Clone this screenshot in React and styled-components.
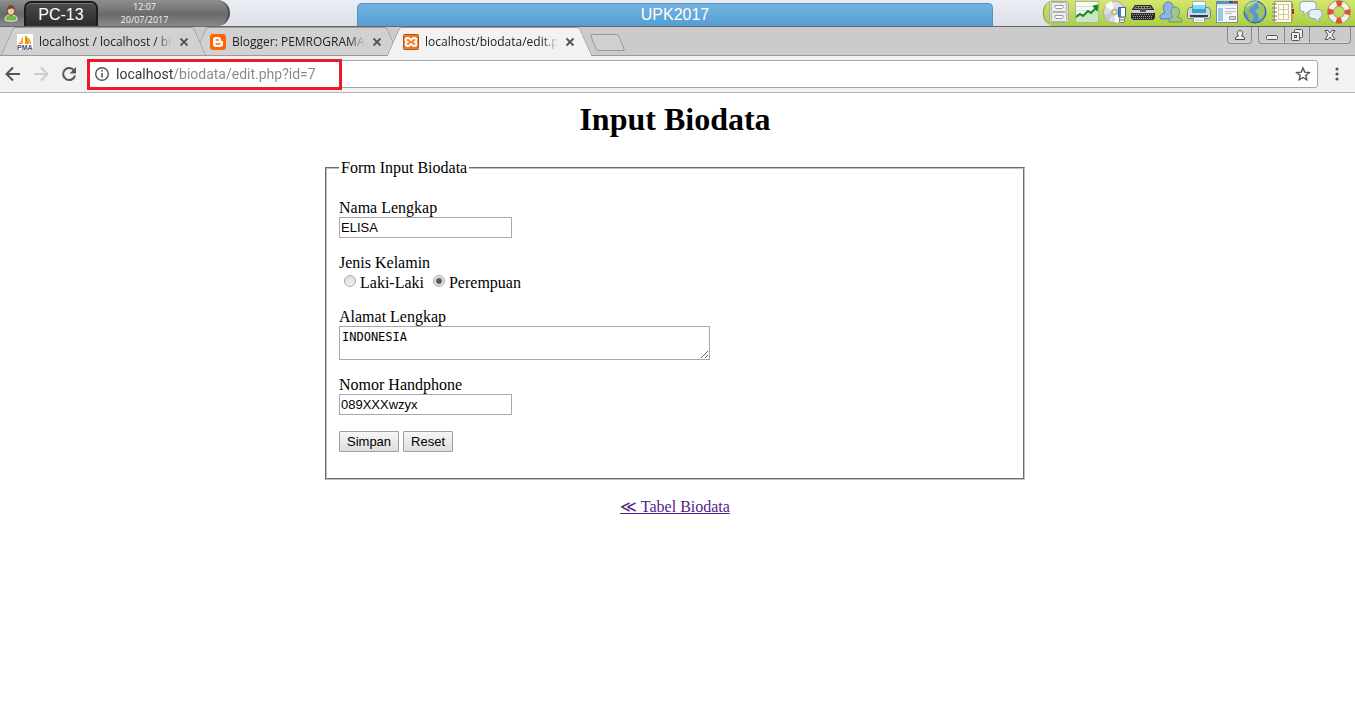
import React from "react"
import styled, { createGlobalStyle, css } from "styled-components"

const sans = `"Liberation Sans", Arial, sans-serif`
const serif = `"Liberation Serif", "Times New Roman", serif`
const chromeFont = `"Open Sans", "Segoe UI", sans-serif`

const GlobalStyle = createGlobalStyle`
    * { box-sizing: border-box; }
    body {
        margin: 0;
        background: #fff;
        overflow-x: hidden;
    }
    button, input, textarea { margin: 0; }`

// ---- desktop bar

const DesktopBar = styled.header`
    display: grid;
    grid-template-columns: 357fr 636fr 362fr;
    height: 26px;
    background: linear-gradient(#eceef5, #dcdfe8);`

const StationPanel = styled.div`
    display: flex;
    justify-self: start;
    width: 230px;
    border-right: 2px solid #4a4a4a;
    border-radius: 0 14px 14px 0;
    background: linear-gradient(#8f8f8f, #6a6a6a 55%, #8a8a8a);`

const UserButton = styled.button`
    width: 24px;
    padding: 0 2px 0 0;
    border: none;
    background: none;
    line-height: 0;`

const StationName = styled.button`
    width: 74px;
    margin-top: 1px;
    padding: 0;
    border: 2px solid #1c1c1c;
    border-bottom: none;
    border-radius: 7px 7px 0 0;
    background: linear-gradient(#4a4a4a, #2c2c2c);
    box-shadow: inset 0 1px 0 #777;
    color: #fff;
    font: 16px/22px ${sans};`

const Clock = styled.div`
    flex: 1;
    padding-right: 37px;
    color: #f4f4f4;
    font: 9px/13px ${chromeFont};
    text-align: center;`

const WindowTitle = styled.div`
    margin-top: 3px;
    border: 1px solid #4e93c6;
    border-bottom: none;
    border-radius: 5px 5px 0 0;
    background: linear-gradient(#74b2de, #559ed4);
    color: #fff;
    font: 16px/22px ${sans};
    text-align: center;`

const Dock = styled.nav`
    display: flex;
    justify-self: end;
    align-items: center;
    gap: 4px;
    padding: 0 4px 2px 3px;
    border-left: 1px solid #7d9c2c;
    border-radius: 12px 0 0 12px;
    background: linear-gradient(#d5e56c, #a9cf45);`

const DockButton = styled.button`
    width: 24px;
    height: 24px;
    padding: 0;
    border: none;
    background: none;
    line-height: 0;`

// ---- browser window

const TabStrip = styled.div`
    display: flex;
    height: 30px;
    border-top: 1px solid #666;
    border-bottom: 1px solid #999;
    background: #cbcbcb;`

const Tabs = styled.div`
    display: flex;
    isolation: isolate;
    padding-left: 7px;`

const tabSide = css`
    content: "";
    position: absolute;
    z-index: -1;
    top: 0;
    bottom: ${p => p.$active ? "-1px" : 0};
    width: 60%;
    border-top: 1px solid #999;
    background: ${p => p.$active ? "#f2f2f2" : "#d1d1d1"};`

const Tab = styled.div`
    position: relative;
    z-index: ${p => p.$order};
    display: flex;
    align-items: center;
    width: 193px;
    padding: 2px 0 0 10px;
    isolation: isolate;
    &::before {
        ${tabSide}
        left: 0;
        border-left: 1px solid #999;
        border-top-left-radius: 3px;
        transform: skewX(-24deg);
    }
    &::after {
        ${tabSide}
        right: 0;
        border-right: 1px solid #999;
        border-top-right-radius: 3px;
        transform: skewX(24deg);
    }`

const TabLabel = styled.span`
    flex: 1;
    margin-left: 6px;
    overflow: hidden;
    white-space: nowrap;
    color: #222;
    font: 12px/20px ${chromeFont};
    mask-image: linear-gradient(90deg, #000 88%, transparent);`

const TabClose = styled.button`
    width: 10px;
    height: 10px;
    margin: 0 11px 0 7px;
    padding: 0;
    border: none;
    background: none;
    line-height: 0;`

const NewTab = styled.button`
    width: 29px;
    height: 17px;
    margin: 7px 0 0 7px;
    padding: 0;
    border: 1px solid #999;
    border-radius: 3px;
    background: #d1d1d1;
    transform: skewX(22deg);`

const WindowControls = styled.div`
    display: flex;
    gap: 6px;
    height: 17px;
    margin: 0 4px 0 auto;`

const ControlGroup = styled.div`
    display: flex;
    border: 1px solid #888;
    border-top: none;
    border-radius: 0 0 4px 4px;
    box-shadow: inset 0 -1px 0 #ddd;`

const ControlButton = styled.button`
    width: ${p => p.$width || 25}px;
    padding: 0;
    border: none;
    background: none;
    line-height: 0;
    & + & { border-left: 1px solid #888; }`

const Toolbar = styled.div`
    display: flex;
    align-items: center;
    gap: 2px;
    height: 37px;
    padding-right: 5px;
    border-bottom: 1px solid #b6b4b6;
    background: #f2f2f2;`

const ToolButton = styled.button`
    width: 26px;
    height: 28px;
    padding: 0;
    border: none;
    background: none;
    line-height: 0;`

const AddressBar = styled.div`
    position: relative;
    display: flex;
    flex: 1;
    align-items: center;
    height: 28px;
    margin: 0 4px;
    padding: 0 6px 0 5px;
    border: 1px solid #a5a5a5;
    border-radius: 3px;
    background: #fff;`

// host part of the address is darker than the path
const AddressInput = styled.input`
    flex: 1;
    height: 20px;
    margin-left: 6px;
    padding: 0;
    border: none;
    outline: none;
    background: linear-gradient(90deg, #333 57px, #888 57px);
    background-clip: text;
    -webkit-text-fill-color: transparent;
    font: 14px/20px Roboto, "Segoe UI", sans-serif;`

const Highlight = styled.div`
    position: absolute;
    top: -2px;
    left: -2px;
    width: 255px;
    height: 31px;
    border: 3px solid #ed1c24;
    pointer-events: none;`

// ---- page

const Page = styled.main`
    padding: 8px 13px 16px 8px;
    color: #000;
    font: 16px/18px ${serif};
    text-align: center;`

const Title = styled.h1`
    margin: 0 0 21px;
    font-size: 32px;
    line-height: 37px;`

const Fieldset = styled.fieldset`
    max-width: 700px;
    margin: 0 auto 18px;
    padding: 6px 12px 10px;
    border: 2px groove #c0c0c0;
    text-align: left;`

const Legend = styled.legend`
    padding: 0 2px;`

const Field = styled.div`
    display: flex;
    flex-direction: column;
    align-items: flex-start;
    margin: 16px 0;`

const RadioRow = styled.div`
    display: flex;
    gap: 4px;
    padding-top: 2px;`

const RadioLabel = styled.label`
    display: flex;`

const Radio = styled.input`
    appearance: none;
    width: 12px;
    height: 12px;
    margin: 1px 4px 0 5px;
    border: 1px solid #a8a8a8;
    border-radius: 50%;
    background: linear-gradient(#ddd, #f0f0f0);
    &:checked {
        background: radial-gradient(circle, #555 0 2px, transparent 4px), #eaeaea;
    }`

const TextInput = styled.input`
    width: 173px;
    height: 21px;
    padding: 1px;
    border: 1px solid #a9a9a9;
    background: #fff;
    color: #000;
    font: 13px/17px ${sans};`

const TextArea = styled.textarea`
    width: 371px;
    height: 34px;
    max-width: 100%;
    padding: 3px 2px 1px;
    border: 1px solid #a9a9a9;
    background: #fff;
    color: #000;
    font: 12px/15px "DejaVu Sans Mono", monospace;`

const Actions = styled.div`
    display: flex;
    gap: 4px;
    margin: 16px 0;`

const FormButton = styled.button`
    height: 21px;
    padding: 0 7px;
    border: 1px solid #a0a0a0;
    border-radius: 1px;
    background: linear-gradient(#f6f6f6, #dedede);
    color: #000;
    font: 13px/19px ${sans};`

const BackLink = styled.a`
    color: #551a8b;`

// ---- icons

const Svg = ({ size = 24, children, ...rest }) =>
    <svg width={size} height={size} viewBox={`0 0 ${size} ${size}`} fill="none" aria-hidden="true" {...rest}>
        {children}
    </svg>

const UserIcon = () =>
    <Svg size={18}>
        <path d="M3 16c0-4 2-5 6-5s6 1 6 5c-2 1.500-10 1.500-12 0z" fill="#72b84c" stroke="#e4f5d6" />
        <ellipse cx="9" cy="6.500" rx="3.800" ry="4.800" fill="#f2c9a4" stroke="#6b4630" />
        <path d="M5 6c0-6 8-6 8 0-2-2-5-2-8 0z" fill="#6b4630" />
    </Svg>

const CabinetIcon = () =>
    <Svg>
        <rect x="2.500" y="1.500" width="19" height="21" rx="1" fill="#d9d9d5" stroke="#a9aaa5" />
        {[2.5, 12.5].map(y =>
            <g key={y}>
                <rect x="4.500" y={y} width="15" height="9" rx="1" fill="#ececea" stroke="#b5b5b2" />
                <path d={`M8 ${y + 3}h8v2l-1 1H9l-1-1z`} fill="#fff" stroke="#999" />
            </g>
        )}
    </Svg>

const ChartIcon = () =>
    <Svg>
        <rect x="0.500" y="1.500" width="23" height="21" fill="#f7f9f7" stroke="#aab5aa" />
        <path d="M1 6.500h22M1 10.500h22M1 14.500h22M1 18.500h22" stroke="#d6ddd6" />
        <path d="M1 18l5-4 3 2 5-5 3 2 6-6v15H1z" fill="#c8e8c4" />
        <path d="M1 17l4-3 3 2 5-5 3 2 5-5" stroke="#168a16" strokeWidth="2" />
        <path d="M18 6l5-1-1 6z" fill="#168a16" stroke="#168a16" />
    </Svg>

const DiscIcon = () =>
    <Svg>
        <circle cx="11.500" cy="12" r="11" fill="#dededf" stroke="#a6a6a8" />
        <path d="M11.500 12L2 6a11 11 0 0 1 7-5zM11.500 12l8 8a11 11 0 0 1-7 3z" fill="#fafafa" />
        <path d="M11.500 12L1 15a11 11 0 0 0 4 6z" fill="#c3c9ce" />
        <circle cx="11.500" cy="12" r="3" fill="#c9cf6a" stroke="#aaa" />
        <circle cx="11.500" cy="12" r="1" fill="#fff" />
        <path d="M15.500 7.500h7V17h-7z" fill="#fff" stroke="#2d6aa8" />
        <path d="M16 8h2v9h-2z" fill="#3f7fbc" />
        <path d="M16.500 17.500h5v5h-5z" fill="#eee" stroke="#888" />
        <path d="M18 19v1.500M20 19v1.500" stroke="#555" />
    </Svg>

const RouterIcon = () =>
    <Svg>
        <path d="M4 5h16l4 6v7l-2 2H2l-2-2v-7z" fill="#2a2a2a" />
        <path d="M5 6h14l2 3H3z" fill="#8a8a8a" />
        <path d="M5 7.500h14" stroke="#222" strokeDasharray="2 1" />
        <rect x="0" y="10" width="24" height="3" rx="1" fill="#d4d4d4" />
        <path d="M9 9h6v3H9z" fill="#555" />
        <path d="M1 14.500h22M2 16.500h20M2 18.500h20" stroke="#9a9a9a" strokeDasharray="1 1" />
    </Svg>

const UsersIcon = () =>
    <Svg>
        <path d="M1 18c0-4 2-4 5-5-2-2-3-10 2.500-11S16 9 12 13c4 1 5 1 5 6H2z" fill="#8eb2ea" stroke="#5578bb" />
        <path d="M10 22c0-4 2-4 4-5-3-3-3-10 2-10s6 7 2 10c3 1 5 1 5 5z" fill="#a2c58b" stroke="#6d9570" />
    </Svg>

const PrinterIcon = () =>
    <Svg>
        <path d="M5.500 1.500h13V10h-13z" fill="#f8fbfd" stroke="#a7adb3" />
        <path d="M2.500 7.500h19l2 3v7q0 1-1 1h-21q-1 0-1-1v-7z" fill="#d3d6de" stroke="#777e8c" />
        <path d="M5 5h14v8H5z" fill="#31a5d5" />
        <path d="M6 5h12v4H6z" fill="#8fd6ef" />
        <path d="M3 15h18v2H3z" fill="#353b47" />
        <path d="M6.500 17.500h11v5h-11z" fill="#fff" stroke="#9aa0a7" />
        <path d="M8 20h8" stroke="#bbb" />
    </Svg>

const BrowserIcon = () =>
    <Svg>
        <rect x="1.500" y="1.500" width="21" height="21" fill="#f5f7fa" stroke="#858b94" />
        <path d="M1 1h22v3H1z" fill="#5b8fce" />
        <path d="M14 1h4v2h-4z" fill="#24518f" />
        <path d="M19 1h4v2h-4z" fill="#d33a20" />
        <path d="M2 4h20v2H2z" fill="#dde7f2" />
        <path d="M3 8h5v13H3z" fill="#8fcdea" />
        <path d="M10 8.500h11M10 11.500h11M10 13.500h7" stroke="#b4bcc6" />
        <path d="M14.500 16.500h6v3h-6z" fill="#d8d8d8" stroke="#999" />
    </Svg>

const GlobeIcon = () =>
    <Svg>
        <circle cx="12" cy="12" r="11" fill="#5b94d6" stroke="#2b5d96" />
        <path d="M4 4c4-3 6-3 8-1l-1 3-3 1-1 3-2 1 3 2 3 3-2 6-3-2-1-5-4-4c0-3 1-5 3-7z" fill="#92bd60" />
        <path d="M14 2l6 3 2 6-2 6-4 3-1-6-3-2 2-3 2-1z" fill="#9ac668" />
        <path d="M4 7c3-4 6-5 10-5" stroke="#bddcf6" strokeWidth="1.500" />
    </Svg>

const NotebookIcon = () =>
    <Svg>
        <path d="M18 3h4v5h-4z" fill="#69a83e" />
        <path d="M18 9h5v5h-5z" fill="#b9202b" />
        <path d="M18 15h4v6h-4z" fill="#e89920" />
        <rect x="3.500" y="1.500" width="17" height="21" fill="#fffdf0" stroke="#a4a183" />
        <path d="M7 4.500h11M7 9.500h11M7 14.500h11M7 19.500h11M7.500 4v16M12.500 4v16M17.500 4v16" stroke="#d3c998" />
        <path d="M1 4h5M1 8h5M1 12h5M1 16h5M1 20h5" stroke="#777" />
    </Svg>

const ChatIcon = () =>
    <Svg>
        <path d="M4 1.500h10q3 0 3 3v4q0 3-3 3H9l-4 4v-4H4q-3 0-3-3v-4q0-3 3-3z" fill="#f5f8ff" stroke="#8fa3c9" />
        <path d="M13 9.500h7q3 0 3 3v3q0 3-3 3v4l-4-4h-3q-3 0-3-3v-3q0-3 3-3z" fill="#e6edfb" stroke="#8fa3c9" />
    </Svg>

const LifebuoyIcon = () =>
    <Svg>
        <circle cx="12" cy="12" r="8.500" stroke="#8f8f88" strokeWidth="6.500" />
        <circle cx="12" cy="12" r="8.500" stroke="#f4f1e8" strokeWidth="5" />
        <circle cx="12" cy="12" r="8.500" stroke="#dc5427" strokeWidth="5.500"
            strokeDasharray="5.350 8" strokeDashoffset="2.675" />
    </Svg>

const PmaIcon = () =>
    <Svg size={16}>
        <rect width="16" height="16" fill="#fff" />
        <path d="M6 1v9H1c3-2 4-5 5-9z" fill="#f5a623" />
        <path d="M8 1c3 2 4 5 4 9H8zM11 3c2 2 3 4 3 7h-1z" fill="#f29111" />
        <text x="0" y="16" fill="#4a4a78" fontFamily="Liberation Sans" fontSize="7" fontWeight="bold">PMA</text>
    </Svg>

const BloggerIcon = () =>
    <Svg size={16}>
        <rect width="16" height="16" rx="3" fill="#f60" />
        <path d="M6 3h2.500C11 3 11 5 11 6.500c0 .8 2 0 2 1V10c0 2-1 3-3 3H6c-2 0-3-1-3-3V6c0-2 1-3 3-3z" fill="#fff" />
        <path d="M6.200 6h2M6.200 10h3.600" stroke="#f60" strokeWidth="1.500" strokeLinecap="round" />
    </Svg>

const XamppIcon = () =>
    <Svg size={16}>
        <rect x="0.500" y="0.500" width="15" height="15" rx="1" fill="#f47c20" stroke="#a9561b" />
        <path d="M5 4C2 4 2 7 4 8c-2 1-2 4 1 4 2 0 2-2 3-2s1 2 3 2c3 0 3-3 1-4 2-1 2-4-1-4-2 0-2 2-3 2S7 4 5 4z"
            stroke="#fff" strokeWidth="2" />
    </Svg>

const CloseIcon = () =>
    <Svg size={10}>
        <path d="M1.500 1.500l7 7M8.500 1.500l-7 7" stroke="#555" strokeWidth="1.800" />
    </Svg>

const ArrowIcon = ({ color, flip }) =>
    <Svg size={16} transform={flip ? "scale(-1 1)" : undefined}>
        <path d="M15 8H2M8 1.500L1.500 8 8 14.500" stroke={color} strokeWidth="2" />
    </Svg>

const ReloadIcon = () =>
    <Svg size={16}>
        <path d="M13 4.500A6 6 0 1 0 14 9.500" stroke="#555" strokeWidth="2" />
        <path d="M15 1v6.500H8.500z" fill="#555" />
    </Svg>

const InfoIcon = () =>
    <Svg size={16}>
        <circle cx="8" cy="8" r="6.300" stroke="#555" strokeWidth="1.400" />
        <path d="M8 7v4.500M8 4v1.600" stroke="#555" strokeWidth="1.600" />
    </Svg>

const StarIcon = () =>
    <Svg size={16}>
        <path d="M8 2l1.700 4.100 4.500.4-3.400 2.900 1 4.400L8 11.500l-3.800 2.300 1-4.400L1.800 6.500l4.500-.4z"
            stroke="#555" strokeWidth="1.400" />
    </Svg>

const MenuIcon = () =>
    <Svg size={16}>
        {[3, 8, 13].map(y => <circle key={y} cx="8" cy={y} r="1.600" fill="#555" />)}
    </Svg>

const ProfileIcon = () =>
    <Svg size={14}>
        <path d="M2.500 11.500c0-3 1-3 3-3.500-2-2-1-5.500 1.500-5.500S10.500 6 8.500 8c2 .5 3 .5 3 3.500z" fill="#eee" stroke="#444" />
    </Svg>

const MinimizeIcon = () =>
    <Svg size={14}>
        <rect x="1.500" y="7.500" width="11" height="4" rx="1" fill="#eee" stroke="#555" />
    </Svg>

const RestoreIcon = () =>
    <Svg size={14}>
        <rect x="4.500" y="1.500" width="8" height="8" rx="1" fill="#eee" stroke="#555" />
        <rect x="1.500" y="4.500" width="8" height="8" rx="1" fill="#eee" stroke="#555" />
        <rect x="4.500" y="7.500" width="2" height="2" stroke="#555" />
    </Svg>

const WindowCloseIcon = () =>
    <Svg size={14}>
        <path d="M2 2.500h3l2 2.500 2-2.500h3L9 7l3 4.500H9L7 9l-2 2.500H2L5 7z" fill="#eee" stroke="#555" />
    </Svg>

// ---- data

const dock = [
    ["Files", CabinetIcon],
    ["Statistics", ChartIcon],
    ["Media", DiscIcon],
    ["Network", RouterIcon],
    ["Users", UsersIcon],
    ["Printer", PrinterIcon],
    ["Windows", BrowserIcon],
    ["Internet", GlobeIcon],
    ["Notes", NotebookIcon],
    ["Chat", ChatIcon],
    ["Help", LifebuoyIcon],
]

const tabs = [
    { title: "localhost / localhost / biodata", Icon: PmaIcon },
    { title: "Blogger: PEMROGRAMAN WEB", Icon: BloggerIcon },
    { title: "localhost/biodata/edit.php?id=7", Icon: XamppIcon, active: true },
]

const Desktop = () =>
    <DesktopBar>
        <StationPanel>
            <UserButton aria-label="User"><UserIcon /></UserButton>
            <StationName>PC-13</StationName>
            <Clock>
                <div>12:07</div>
                <div>20/07/2017</div>
            </Clock>
        </StationPanel>
        <WindowTitle>UPK2017</WindowTitle>
        <Dock>
            {dock.map(([name, Icon]) =>
                <DockButton key={name} aria-label={name}><Icon /></DockButton>
            )}
        </Dock>
    </DesktopBar>

const Browser = () =>
    <>
        <TabStrip>
            <Tabs>
                {tabs.map(({ title, Icon, active }, i) =>
                    <Tab key={title} $active={active} $order={active ? 10 : tabs.length - i}>
                        <Icon />
                        <TabLabel>{title}</TabLabel>
                        <TabClose aria-label="Close tab"><CloseIcon /></TabClose>
                    </Tab>
                )}
            </Tabs>
            <NewTab aria-label="New tab" />
            <WindowControls>
                <ControlGroup>
                    <ControlButton aria-label="Profile" $width={23}><ProfileIcon /></ControlButton>
                </ControlGroup>
                <ControlGroup>
                    <ControlButton aria-label="Minimize"><MinimizeIcon /></ControlButton>
                    <ControlButton aria-label="Restore"><RestoreIcon /></ControlButton>
                    <ControlButton aria-label="Close" $width={41}><WindowCloseIcon /></ControlButton>
                </ControlGroup>
            </WindowControls>
        </TabStrip>
        <Toolbar>
            <ToolButton aria-label="Back"><ArrowIcon color="#555" /></ToolButton>
            <ToolButton aria-label="Forward"><ArrowIcon color="#ccc" flip /></ToolButton>
            <ToolButton aria-label="Reload"><ReloadIcon /></ToolButton>
            <AddressBar>
                <InfoIcon />
                <AddressInput aria-label="Address" defaultValue="localhost/biodata/edit.php?id=7" />
                <StarIcon />
                <Highlight />
            </AddressBar>
            <ToolButton aria-label="Menu"><MenuIcon /></ToolButton>
        </Toolbar>
    </>

class BiodataForm extends React.Component {
    state = { gender: "P" }
    onGender = (e) => {
        this.setState({ gender: e.target.value })
    }
    onSubmit = (e) => {
        e.preventDefault()
    }
    render () {
        const { gender } = this.state

        return (
            <form onSubmit={this.onSubmit}>
                <Fieldset>
                    <Legend>Form Input Biodata</Legend>
                    <Field>
                        <label htmlFor="nama">Nama Lengkap</label>
                        <TextInput id="nama" defaultValue="ELISA" />
                    </Field>
                    <Field role="radiogroup" aria-labelledby="jk">
                        <span id="jk">Jenis Kelamin</span>
                        <RadioRow>
                            <RadioLabel>
                                <Radio type="radio" name="jk" value="L"
                                    checked={gender === "L"} onChange={this.onGender} />
                                Laki-Laki
                            </RadioLabel>
                            <RadioLabel>
                                <Radio type="radio" name="jk" value="P"
                                    checked={gender === "P"} onChange={this.onGender} />
                                Perempuan
                            </RadioLabel>
                        </RadioRow>
                    </Field>
                    <Field>
                        <label htmlFor="alamat">Alamat Lengkap</label>
                        <TextArea id="alamat" defaultValue="INDONESIA" />
                    </Field>
                    <Field>
                        <label htmlFor="hp">Nomor Handphone</label>
                        <TextInput id="hp" defaultValue="089XXXwzyx" />
                    </Field>
                    <Actions>
                        <FormButton type="submit">Simpan</FormButton>
                        <FormButton type="reset">Reset</FormButton>
                    </Actions>
                </Fieldset>
            </form>
        )
    }
}

const App = () =>
    <>
        <GlobalStyle />
        <Desktop />
        <Browser />
        <Page>
            <Title>Input Biodata</Title>
            <BiodataForm />
            <BackLink href="#tabel">≪ Tabel Biodata</BackLink>
        </Page>
    </>

export default App
